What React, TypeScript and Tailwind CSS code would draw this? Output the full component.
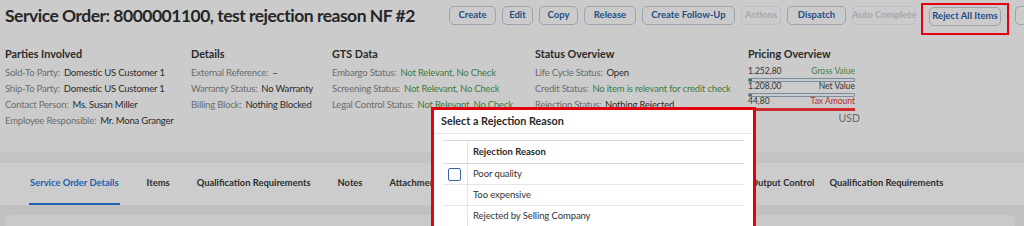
import React from 'react';

const font = { fontFamily: 'Lato, "Liberation Sans", sans-serif' };

const buttons = [
  { label: 'Create', w: 'w-[47px]' },
  { label: 'Edit', w: 'w-[31px]' },
  { label: 'Copy', w: 'w-[39px]' },
  { label: 'Release', w: 'w-[52px]' },
  { label: 'Create Follow-Up', w: 'w-[93px]' },
  { label: 'Actions', w: 'w-[40px]', disabled: true },
  { label: 'Dispatch', w: 'w-[59px]' },
  { label: 'Auto Complete', w: 'w-[64px]', disabled: true },
];

const sections = [
  {
    title: 'Parties Involved',
    w: 'w-[186px]',
    rows: [
      ['Sold-To Party:', 'Domestic US Customer 1'],
      ['Ship-To Party:', 'Domestic US Customer 1'],
      ['Contact Person:', 'Ms. Susan Miller'],
      ['Employee Responsible:', 'Mr. Mona Granger'],
    ],
  },
  {
    title: 'Details',
    w: 'w-[141px]',
    rows: [
      ['External Reference:', '–'],
      ['Warranty Status:', 'No Warranty'],
      ['Billing Block:', 'Nothing Blocked'],
    ],
  },
  {
    title: 'GTS Data',
    w: 'w-[203px]',
    green: true,
    rows: [
      ['Embargo Status:', 'Not Relevant, No Check'],
      ['Screening Status:', 'Not Relevant, No Check'],
      ['Legal Control Status:', 'Not Relevant, No Check'],
    ],
  },
  {
    title: 'Status Overview',
    w: 'w-[213px]',
    rows: [
      ['Life Cycle Status:', 'Open'],
      ['Credit Status:', 'No item is relevant for credit check', true],
      ['Rejection Status:', 'Nothing Rejected'],
    ],
  },
];

// tabs hidden behind the dialog get fixed widths so the visible ones land in place
const tabs = [
  { label: 'Service Order Details' },
  { label: 'Items' },
  { label: 'Qualification Requirements' },
  { label: 'Notes' },
  { label: 'Attachments', w: 'w-[60px]' },
  { label: 'Related Objects', w: 'w-[98px]' },
  { label: 'Service Confirmations', w: 'w-[122px]' },
  { label: 'Output Control' },
  { label: 'Qualification Requirements', extra: '-ml-[12px]' },
];

const reasons = ['Poor quality', 'Too expensive', 'Rejected by Selling Company'];

function PriceRow({ value, label, tone, bar }: { value: string; label: string; tone: string; bar: React.ReactNode }) {
  return (
    <div className="h-[15px]">
      <div className="flex justify-between h-[9px] items-center">
        <span>{value}</span>
        <span className={tone}>{label}</span>
      </div>
      <div className="mt-[2px]">{bar}</div>
    </div>
  );
}

export default function App() {
  return (
    <div className="relative w-[1024px] h-[226px] overflow-hidden bg-[#cbcbcb] text-[#2c2c2c]" style={font}>
      {/* Header */}
      <div className="flex items-start h-[46px] pl-[5px]">
        <h1 className="w-[440px] shrink-0 mt-[3px] text-[17.5px] leading-[26px] font-bold tracking-[-0.5px] text-[#262626] whitespace-nowrap">
          Service Order: 8000001100, test rejection reason NF #2
        </h1>
        <div className="ml-[4px] mt-[6px] flex items-start gap-[6px]">
          {buttons.map((b) => (
            <div
              key={b.label}
              className={`${b.w} shrink-0 h-[19px] flex items-center justify-center rounded-[5px] border text-[9.5px] font-bold whitespace-nowrap ${
                b.disabled ? 'border-[#bcc1c6] text-[#a1a9b2]' : 'border-[#9aa4ae] text-[#224e86]'
              }`}
            >
              {b.label}
            </div>
          ))}
          <div className="shrink-0 -ml-[1px] -mt-[3px] w-[88px] h-[32px] border-[2.5px] border-[#e3000f] flex justify-center pt-[1.5px]">
            <div className="w-[72px] h-[19px] flex items-center justify-center rounded-[5px] border border-[#9aa4ae] text-[9.5px] font-bold text-[#224e86] whitespace-nowrap">
              Reject All Items
            </div>
          </div>
          <div className="shrink-0 w-[12px] h-[19px] rounded-l-[5px] border border-r-0 border-[#9aa4ae]" />
        </div>
      </div>

      {/* Header facets */}
      <div className="flex pl-[5px] h-[106px]">
        {sections.map((s) => (
          <div key={s.title} className={`${s.w} shrink-0`}>
            <div className="text-[10.8px] leading-[16px] font-bold text-[#2a2a2a] mb-[3px]">{s.title}</div>
            {s.rows.map(([label, value, green]) => (
              <div key={label as string} className="text-[9.5px] leading-[16px] tracking-[-0.2px] whitespace-nowrap">
                <span className="text-[#6b6b6b]">{label}</span>
                <span className={`ml-[4px] ${s.green || green ? 'text-[#3e7b3e]' : 'text-[#2c2c2c]'}`}>{value}</span>
              </div>
            ))}
          </div>
        ))}
        <div className="w-[114px] shrink-0">
          <div className="text-[10.8px] leading-[16px] font-bold text-[#2a2a2a]">Pricing Overview</div>
          <div className="mt-[5px] w-[107px] text-[8.5px] leading-[9px] text-[#333333]">
            <PriceRow
              value="1.252,80"
              label="Gross Value"
              tone="text-[#4a7d4a]"
              bar={
                <div className="h-[4px] border border-[#7d8a97] bg-[#c6cbd0] rounded-[1px]">
                  <div className="w-[3px] h-full bg-[#2e7d32]" />
                </div>
              }
            />
            <PriceRow
              value="1.208,00"
              label="Net Value"
              tone="text-[#333333]"
              bar={
                <div className="h-[4px] border border-[#7d8a97] bg-[#c6cbd0] rounded-[1px]">
                  <div className="w-[3px] h-full bg-[#56708a]" />
                </div>
              }
            />
            <PriceRow value="44,80" label="Tax Amount" tone="text-[#b42a2a]" bar={<div className="h-[3px] bg-[#cf2a2a]" />} />
          </div>
          <div className="w-[112px] text-right text-[10.5px] leading-[12px] mt-[0px] text-[#6b6b6b]">USD</div>
        </div>
      </div>

      {/* Bands and tabs */}
      <div className="h-[11px] bg-[#c4c4c4]" />
      <div className="h-[42px] bg-[#cccccc] flex items-stretch pl-[29px] gap-[27px] shadow-[0_1px_2px_rgba(0,0,0,0.12)]">
        {tabs.map((t, i) => (
          <div
            key={i}
            className={`${t.w ?? ''} ${t.extra ?? ''} shrink-0 flex items-center text-[9.4px] font-bold whitespace-nowrap pt-[1px] ${
              i === 0 ? 'text-[#2060b0] border-b-[2px] border-[#2060b0] px-[1px]' : 'text-[#2d2d2d] border-b-[2px] border-transparent'
            }`}
          >
            {t.label}
          </div>
        ))}
      </div>
      <div className="h-[21px] bg-[#c1c1c1] pt-[10px] pl-[5px]">
        <div className="h-[20px] w-[1010px] rounded-t-[6px] bg-[#c9c9c9]" />
      </div>

      {/* Dialog */}
      <div className="absolute left-[431px] top-[107px] w-[325px] h-[130px] border-[3px] border-[#e3000f] bg-white">
        <div className="h-[24px] pl-[7px] flex items-center text-[10.8px] font-bold text-[#2a2a2a] border-b border-[#e5e5e5]">
          Select a Rejection Reason
        </div>
        <div className="mx-[9px] mt-[6px] border-t border-[#d9d9d9]">
          <div className="flex h-[23px] border-b border-[#d9d9d9]">
            <div className="w-[25px] border-r border-[#e5e5e5]" />
            <div className="pl-[5px] flex items-center text-[9.5px] font-bold text-[#2a2a2a]">Rejection Reason</div>
          </div>
          {reasons.map((r, i) => (
            <div key={r} className="flex h-[21px] border-b border-[#e5e5e5]">
              <div className="w-[25px] border-r border-[#e5e5e5] flex items-center justify-center">
                {i === 0 && <div className="w-[13px] h-[13px] rounded-[2px] border-[1.5px] border-[#3b5ea5] mt-[1px] ml-[-1px]" />}
              </div>
              <div className="pl-[5px] flex items-center text-[9.5px] tracking-[-0.1px] text-[#333333]">{r}</div>
            </div>
          ))}
        </div>
      </div>
    </div>
  );
}
